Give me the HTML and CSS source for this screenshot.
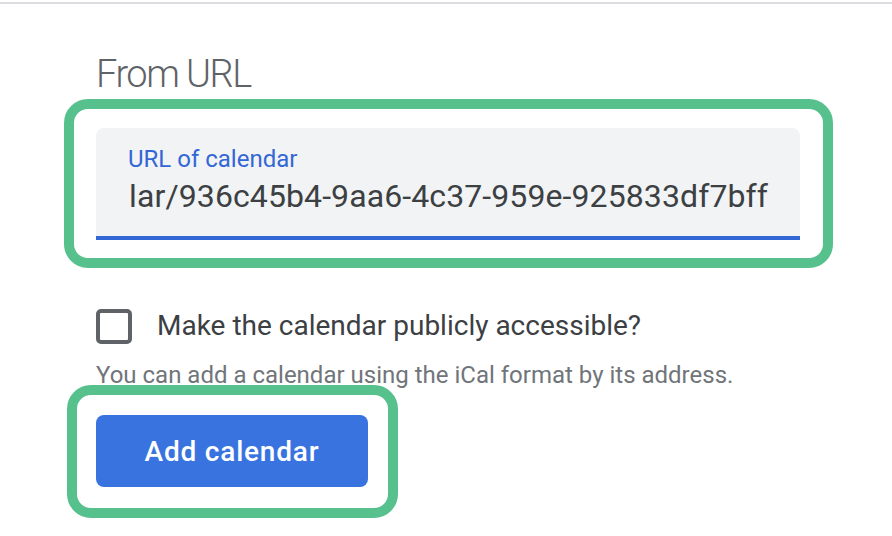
FILE: index.html
```html
<!DOCTYPE html>
<html lang="en">
<head>
<meta charset="utf-8">
<title>From URL</title>
<link rel="stylesheet" href="styles.css">
</head>
<body>
<div class="topbar"></div>
<main class="page">
  <h2 class="title">From URL</h2>
  <div class="field-wrap highlight">
    <div class="field">
      <div class="field-label">URL of calendar</div>
      <div class="field-value"><span>lar/936c45b4-9aa6-4c37-959e-925833df7bff</span></div>
    </div>
  </div>
  <label class="check-row">
    <span class="checkbox"></span>
    <span class="check-text">Make the calendar publicly accessible?</span>
  </label>
  <p class="helper">You can add a calendar using the iCal format by its address.</p>
  <div class="btn-wrap highlight-btn">
    <button class="btn" type="button">Add calendar</button>
  </div>
</main>
</body>
</html>
```
FILE: styles.css
```css
* { box-sizing: border-box; }
html, body { margin: 0; padding: 0; background: #fff; }
body {
  font-family: Roboto, "Noto Sans", "Liberation Sans", sans-serif;
  width: 892px;
  height: 536px;
  overflow: hidden;
}
.topbar {
  height: 2px;
  margin-top: 2px;
  background: #dadce0;
}
.page {
  padding: 0 92px 0 96px;
  display: flex;
  flex-direction: column;
  align-items: flex-start;
}
.title {
  margin: 48px 0 0 0;
  height: 44px;
  font-size: 38px;
  line-height: 44px;
  font-weight: 300;
  color: #5f6368;
  letter-spacing: -1.5px;
}
.field-wrap {
  position: relative;
  margin-top: 32px;
  width: 100%;
}
.highlight::after,
.highlight-btn::after {
  content: "";
  position: absolute;
  border: 10px solid #57c18d;
  border-radius: 24px;
  pointer-events: none;
}
.highlight::after {
  top: -29px;
  left: -32px;
  right: -33px;
  bottom: -28px;
}
.field {
  background: #f1f3f4;
  border-radius: 8px 8px 0 0;
  border-bottom: 4px solid #3367d6;
  height: 112px;
  padding: 17px 32px 0 31px;
}
.field-label {
  font-size: 24px;
  line-height: 28px;
  color: #3367d6;
  padding-left: 1px;
}
.field-value {
  margin-top: 3px;
  font-size: 32px;
  line-height: 40px;
  letter-spacing: 0.1px;
  color: #3c4043;
  white-space: nowrap;
  display: flex;
  justify-content: flex-end;
}
.check-row {
  margin-top: 68px;
  display: flex;
  align-items: center;
  gap: 25px;
  height: 36px;
}
.checkbox {
  width: 36px;
  height: 35px;
  border: 4px solid #5f6368;
  border-radius: 5px;
  flex: none;
}
.check-text {
  font-size: 28px;
  line-height: 36px;
  color: #3c4043;
}
.helper {
  margin: 17px 0 0 0;
  font-size: 24px;
  line-height: 28px;
  color: #70757a;
}
.btn-wrap {
  position: relative;
  margin-top: 26px;
}
.highlight-btn::after {
  top: -30px;
  left: -29px;
  right: -30px;
  bottom: -31px;
}
.btn {
  width: 272px;
  height: 72px;
  border: 0;
  border-radius: 8px;
  background: #3873e0;
  color: #fff;
  font-family: Roboto, "Noto Sans", sans-serif;
  font-size: 28px;
  font-weight: 500;
  letter-spacing: 0.8px;
  display: flex;
  align-items: center;
  justify-content: center;
  padding: 0;
}
```
